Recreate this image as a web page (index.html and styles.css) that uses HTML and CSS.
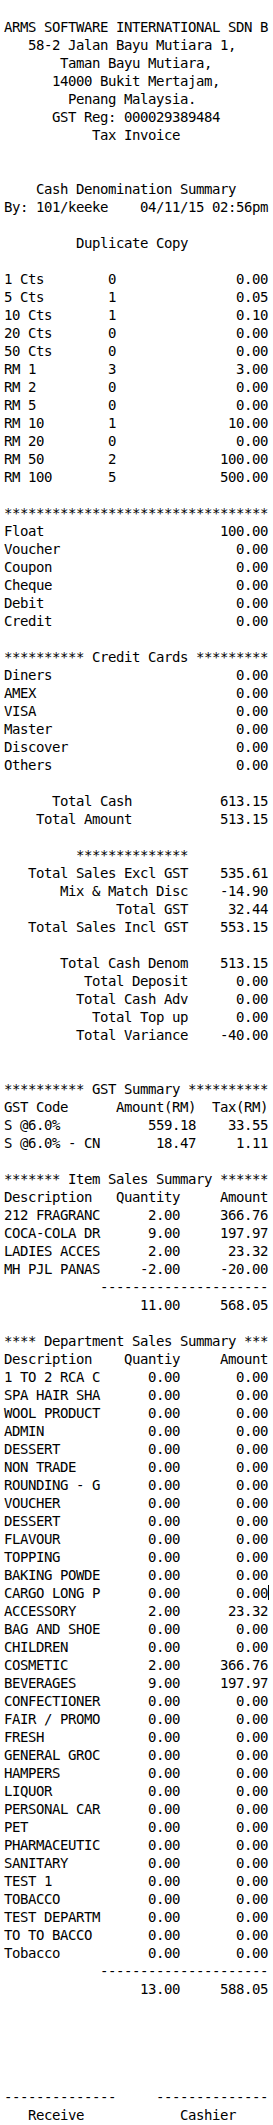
FILE: index.html
```html
<!DOCTYPE html>
<html lang="en">
<head>
<meta charset="utf-8">
<title>Cash Denomination Summary</title>
<link rel="stylesheet" href="styles.css">
</head>
<body>
<main class="receipt">
  <header class="block">
    <div class="line">ARMS SOFTWARE INTERNATIONAL SDN B</div>
    <div class="line ctr">58-2 Jalan Bayu Mutiara 1, </div>
    <div class="line ctr">Taman Bayu Mutiara,</div>
    <div class="line ctr">14000 Bukit Mertajam,</div>
    <div class="line ctr">Penang Malaysia. </div>
    <div class="line ctr">GST Reg: 000029389484</div>
    <div class="line ctr">Tax Invoice</div>
  </header>

  <section class="block gap2">
    <div class="line ctr">Cash Denomination Summary</div>
    <div class="split"><span>By: 101/keeke</span><span>04/11/15 02:56pm</span></div>
  </section>

  <div class="block gap1 line ctr">Duplicate Copy </div>

  <section class="block gap1">
    <div class="denom"><span>1 Cts</span><span>0</span><span class="r">0.00</span></div>
    <div class="denom"><span>5 Cts</span><span>1</span><span class="r">0.05</span></div>
    <div class="denom"><span>10 Cts</span><span>1</span><span class="r">0.10</span></div>
    <div class="denom"><span>20 Cts</span><span>0</span><span class="r">0.00</span></div>
    <div class="denom"><span>50 Cts</span><span>0</span><span class="r">0.00</span></div>
    <div class="denom"><span>RM 1</span><span>3</span><span class="r">3.00</span></div>
    <div class="denom"><span>RM 2</span><span>0</span><span class="r">0.00</span></div>
    <div class="denom"><span>RM 5</span><span>0</span><span class="r">0.00</span></div>
    <div class="denom"><span>RM 10</span><span>1</span><span class="r">10.00</span></div>
    <div class="denom"><span>RM 20</span><span>0</span><span class="r">0.00</span></div>
    <div class="denom"><span>RM 50</span><span>2</span><span class="r">100.00</span></div>
    <div class="denom"><span>RM 100</span><span>5</span><span class="r">500.00</span></div>
  </section>

  <section class="block gap1">
    <div class="line">*********************************</div>
    <div class="split"><span>Float</span><span>100.00</span></div>
    <div class="split"><span>Voucher</span><span>0.00</span></div>
    <div class="split"><span>Coupon</span><span>0.00</span></div>
    <div class="split"><span>Cheque</span><span>0.00</span></div>
    <div class="split"><span>Debit</span><span>0.00</span></div>
    <div class="split"><span>Credit</span><span>0.00</span></div>
  </section>

  <section class="block gap1">
    <div class="line">********** Credit Cards *********</div>
    <div class="split"><span>Diners</span><span>0.00</span></div>
    <div class="split"><span>AMEX</span><span>0.00</span></div>
    <div class="split"><span>VISA</span><span>0.00</span></div>
    <div class="split"><span>Master</span><span>0.00</span></div>
    <div class="split"><span>Discover</span><span>0.00</span></div>
    <div class="split"><span>Others</span><span>0.00</span></div>
  </section>

  <section class="block gap1">
    <div class="tot16"><span>Total Cash</span><span>613.15</span></div>
    <div class="tot16"><span>Total Amount</span><span>513.15</span></div>
  </section>

  <section class="block gap1">
    <div class="tot23"><span>**************</span><span></span></div>
    <div class="tot23"><span>Total Sales Excl GST</span><span>535.61</span></div>
    <div class="tot23"><span>Mix &amp; Match Disc</span><span>-14.90</span></div>
    <div class="tot23"><span>Total GST</span><span>32.44</span></div>
    <div class="tot23"><span>Total Sales Incl GST</span><span>553.15</span></div>
  </section>

  <section class="block gap1">
    <div class="tot23"><span>Total Cash Denom</span><span>513.15</span></div>
    <div class="tot23"><span>Total Deposit</span><span>0.00</span></div>
    <div class="tot23"><span>Total Cash Adv</span><span>0.00</span></div>
    <div class="tot23"><span>Total Top up</span><span>0.00</span></div>
    <div class="tot23"><span>Total Variance</span><span>-40.00</span></div>
  </section>

  <section class="block gap2">
    <div class="line">********** GST Summary **********</div>
    <div class="gst"><span>GST Code</span><span>Amount(RM)</span><span>Tax(RM)</span></div>
    <div class="gst"><span>S @6.0%</span><span>559.18</span><span>33.55</span></div>
    <div class="gst"><span>S @6.0% - CN</span><span>18.47</span><span>1.11</span></div>
  </section>

  <section class="block gap1">
    <div class="line">******* Item Sales Summary ******</div>
    <div class="items"><span>Description</span><span>Quantity</span><span>Amount</span></div>
    <div class="items"><span>212 FRAGRANC</span><span>2.00</span><span>366.76</span></div>
    <div class="items"><span>COCA-COLA DR</span><span>9.00</span><span>197.97</span></div>
    <div class="items"><span>LADIES ACCES</span><span>2.00</span><span>23.32</span></div>
    <div class="items"><span>MH PJL PANAS</span><span>-2.00</span><span>-20.00</span></div>
    <div class="items"><span class="rule">---------------------</span></div>
    <div class="items"><span></span><span>11.00</span><span>568.05</span></div>
  </section>

  <section class="block gap1">
    <div class="line">**** Department Sales Summary ***</div>
    <div class="items"><span>Description</span><span>Quantiy</span><span>Amount</span></div>
    <div class="items"><span>1 TO 2 RCA C</span><span>0.00</span><span>0.00</span></div>
    <div class="items"><span>SPA HAIR SHA</span><span>0.00</span><span>0.00</span></div>
    <div class="items"><span>WOOL PRODUCT</span><span>0.00</span><span>0.00</span></div>
    <div class="items"><span>ADMIN</span><span>0.00</span><span>0.00</span></div>
    <div class="items"><span>DESSERT</span><span>0.00</span><span>0.00</span></div>
    <div class="items"><span>NON TRADE</span><span>0.00</span><span>0.00</span></div>
    <div class="items"><span>ROUNDING - G</span><span>0.00</span><span>0.00</span></div>
    <div class="items"><span>VOUCHER</span><span>0.00</span><span>0.00</span></div>
    <div class="items"><span>DESSERT</span><span>0.00</span><span>0.00</span></div>
    <div class="items"><span>FLAVOUR</span><span>0.00</span><span>0.00</span></div>
    <div class="items"><span>TOPPING</span><span>0.00</span><span>0.00</span></div>
    <div class="items"><span>BAKING POWDE</span><span>0.00</span><span>0.00</span></div>
    <div class="items"><span>CARGO LONG P</span><span>0.00</span><span class="caret">0.00</span></div>
    <div class="items"><span>ACCESSORY</span><span>2.00</span><span>23.32</span></div>
    <div class="items"><span>BAG AND SHOE</span><span>0.00</span><span>0.00</span></div>
    <div class="items"><span>CHILDREN</span><span>0.00</span><span>0.00</span></div>
    <div class="items"><span>COSMETIC</span><span>2.00</span><span>366.76</span></div>
    <div class="items"><span>BEVERAGES</span><span>9.00</span><span>197.97</span></div>
    <div class="items"><span>CONFECTIONER</span><span>0.00</span><span>0.00</span></div>
    <div class="items"><span>FAIR / PROMO</span><span>0.00</span><span>0.00</span></div>
    <div class="items"><span>FRESH</span><span>0.00</span><span>0.00</span></div>
    <div class="items"><span>GENERAL GROC</span><span>0.00</span><span>0.00</span></div>
    <div class="items"><span>HAMPERS</span><span>0.00</span><span>0.00</span></div>
    <div class="items"><span>LIQUOR</span><span>0.00</span><span>0.00</span></div>
    <div class="items"><span>PERSONAL CAR</span><span>0.00</span><span>0.00</span></div>
    <div class="items"><span>PET</span><span>0.00</span><span>0.00</span></div>
    <div class="items"><span>PHARMACEUTIC</span><span>0.00</span><span>0.00</span></div>
    <div class="items"><span>SANITARY</span><span>0.00</span><span>0.00</span></div>
    <div class="items"><span>TEST 1</span><span>0.00</span><span>0.00</span></div>
    <div class="items"><span>TOBACCO</span><span>0.00</span><span>0.00</span></div>
    <div class="items"><span>TEST DEPARTM</span><span>0.00</span><span>0.00</span></div>
    <div class="items"><span>TO TO BACCO</span><span>0.00</span><span>0.00</span></div>
    <div class="items"><span>Tobacco</span><span>0.00</span><span>0.00</span></div>
    <div class="items"><span class="rule">---------------------</span></div>
    <div class="items"><span></span><span>13.00</span><span>588.05</span></div>
  </section>

  <footer class="block gap5 sign">
    <span>--------------</span><span></span><span>--------------</span>
    <span class="who">Receive</span><span></span><span class="who">Cashier</span>
  </footer>
</main>
</body>
</html>
```

FILE: styles.css
```css
:root {
  --c: 8px;
  --lh: 18px;
}

html, body {
  margin: 0;
  padding: 0;
  background: #ffffff;
}

.receipt {
  width: calc(var(--c) * 33);
  padding: 18px 0 1px 4px;
  font-family: "DejaVu Sans Mono", "Liberation Mono", monospace;
  font-size: 14px;
  letter-spacing: -0.43px;
  line-height: var(--lh);
  color: #000000;
}

.line,
.receipt span {
  white-space: pre;
}

.block { display: block; }
.gap1 { margin-top: var(--lh); }
.gap2 { margin-top: calc(var(--lh) * 2); }
.gap5 { margin-top: calc(var(--lh) * 5); }

.line { height: var(--lh); }
.ctr { text-align: center; }

.split {
  display: flex;
  justify-content: space-between;
}

.denom {
  display: grid;
  grid-template-columns: calc(var(--c) * 13) 1fr auto;
}
.r { text-align: right; }

.tot16, .tot23 {
  display: grid;
  text-align: right;
  min-height: var(--lh);
}
.tot16 { grid-template-columns: calc(var(--c) * 16) 1fr; }
.tot23 { grid-template-columns: calc(var(--c) * 23) 1fr; }

.gst {
  display: grid;
  grid-template-columns: 1fr calc(var(--c) * 10) calc(var(--c) * 9);
}
.gst > span + span { text-align: right; }

.items {
  display: grid;
  grid-template-columns: calc(var(--c) * 12) calc(var(--c) * 10) calc(var(--c) * 11);
  min-height: var(--lh);
}
.items > span + span { text-align: right; }
.items > .rule {
  grid-column: 2 / 4;
  text-align: right;
}

.caret { position: relative; }
.caret::after {
  content: "";
  position: absolute;
  right: -1px;
  top: 1px;
  width: 1px;
  height: 15px;
  background: #000000;
}

.sign {
  display: grid;
  grid-template-columns: calc(var(--c) * 14) calc(var(--c) * 5) calc(var(--c) * 14);
}
.sign .who { padding-left: calc(var(--c) * 3); }
```
